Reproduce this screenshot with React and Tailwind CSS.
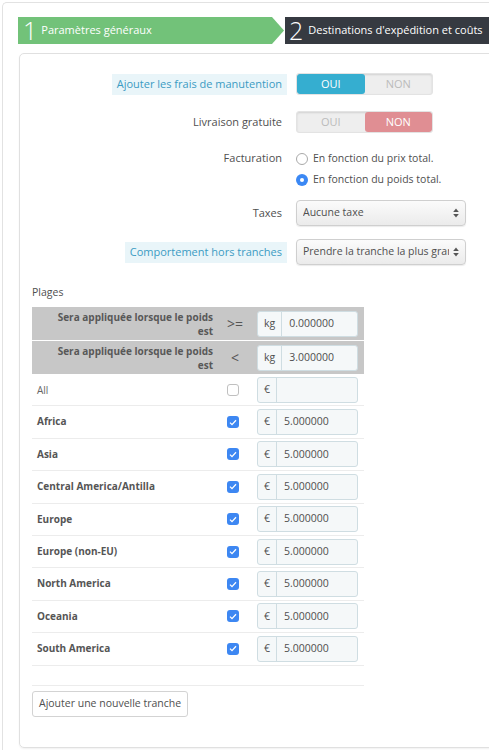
import React from "react";

function Toggle({ value }) {
  return (
    <div className="flex w-[137px] h-[22px] rounded-[3px] overflow-hidden bg-[#eeeeee] shadow-[inset_0_1px_2px_rgba(0,0,0,0.12)] border border-[#e3e3e3]">
      {value === "oui" ? (
        <>
          <div className="w-1/2 flex items-center justify-center text-[11px] text-white bg-[#35aed0] rounded-[3px]">OUI</div>
          <div className="w-1/2 flex items-center justify-center text-[11px] text-[#bbbbbb]">NON</div>
        </>
      ) : (
        <>
          <div className="w-1/2 flex items-center justify-center text-[11px] text-[#bbbbbb]">OUI</div>
          <div className="w-1/2 flex items-center justify-center text-[11px] text-white bg-[#e08e93] rounded-[3px]">NON</div>
        </>
      )}
    </div>
  );
}

function SelectBox({ text }) {
  return (
    <div className="w-[170px] h-[26px] rounded-[4px] border border-[#cfcfcf] bg-gradient-to-b from-[#fbfbfb] to-[#ebebeb] shadow-[0_1px_1px_rgba(0,0,0,0.08)] flex items-center pl-[6px] pr-[6px] text-[10.5px] text-[#4f4f4f]">
      <span className="flex-1 whitespace-nowrap overflow-hidden">{text}</span>
      <svg width="6" height="10" viewBox="0 0 6 10" className="ml-[4px] shrink-0">
        <polygon points="3,0.5 5.8,4 0.2,4" fill="#555" />
        <polygon points="3,9.5 5.8,6 0.2,6" fill="#555" />
      </svg>
    </div>
  );
}

function Radio({ checked }) {
  return checked ? (
    <span className="w-[12px] h-[12px] rounded-full bg-[#3b88f4] flex items-center justify-center shrink-0">
      <span className="w-[4px] h-[4px] rounded-full bg-white" />
    </span>
  ) : (
    <span className="w-[12px] h-[12px] rounded-full border border-[#a9a9a9] bg-white shrink-0" />
  );
}

function Checkbox({ checked }) {
  return checked ? (
    <span className="w-[12px] h-[12px] rounded-[3px] bg-[#3d87f2] flex items-center justify-center">
      <svg width="8" height="7" viewBox="0 0 8 7">
        <path d="M1 3.6 L3 5.6 L7 1.2" stroke="white" strokeWidth="1.3" fill="none" />
      </svg>
    </span>
  ) : (
    <span className="w-[12px] h-[12px] rounded-[3px] border border-[#c0c0c0] bg-white" />
  );
}

function InputGroup({ unit, value }) {
  return (
    <div className="ml-[5px] w-[101px] h-[26px] flex rounded-[3px] border border-[#cfdde2] bg-[#f5f8f9] text-[10.5px] text-[#4f4f4f]">
      <div className="px-[6px] flex items-center border-r border-[#cfdde2]">{unit}</div>
      <div className="flex-1 flex items-center pl-[7px]">{value}</div>
    </div>
  );
}

export default function App() {
  const regions = [
    "Africa",
    "Asia",
    "Central America/Antilla",
    "Europe",
    "Europe (non-EU)",
    "North America",
    "Oceania",
    "South America",
  ];
  return (
    <div
      className="w-[489px] h-[750px] overflow-hidden bg-white"
      style={{ fontFamily: '"Open Sans", "Noto Sans", sans-serif' }}
    >
      <div className="ml-[2px] mt-[2px] w-[560px] h-[780px] border-l border-t border-[#e2e2e2] rounded-tl-[5px] pl-[15px] pt-[14px]">
        {/* Steps */}
        <div className="flex h-[27px]">
          <div className="flex items-center bg-[#72c279] w-[254px] text-white pl-[5px]">
            <span className="text-[25px] font-light leading-none">1</span>
            <span className="text-[11px] ml-[4px] whitespace-nowrap">Paramètres généraux</span>
          </div>
          <svg width="12" height="27" viewBox="0 0 12 27" className="shrink-0">
            <polygon points="0,0 12,13.5 0,27" fill="#72c279" />
          </svg>
          <div className="ml-[1px] flex-1 bg-[#363a41] flex items-center text-white pl-[4px]">
            <span className="text-[25px] font-light leading-none">2</span>
            <span className="text-[11px] ml-[5px] whitespace-nowrap">Destinations d'expédition et coûts</span>
          </div>
        </div>

        {/* Card */}
        <div className="mt-[9px] ml-[1px] w-[540px] h-[695px] border border-[#e0e0e0] rounded-[5px] shadow-[0_1px_2px_rgba(0,0,0,0.06)] pt-[19px] text-[11px] text-[#4f4f4f]">
          {/* Row 1 */}
          <div className="flex items-center h-[22px]">
            <div className="w-[267px] flex justify-end">
              <span className="bg-[#e9f5f9] text-[#3b9bc3] px-[5px] h-[21px] flex items-center whitespace-nowrap">
                Ajouter les frais de manutention
              </span>
            </div>
            <div className="ml-[9px]">
              <Toggle value="oui" />
            </div>
          </div>
          {/* Row 2 */}
          <div className="flex items-center h-[22px] mt-[16px]">
            <div className="w-[267px] flex justify-end pr-[5px] whitespace-nowrap">Livraison gratuite</div>
            <div className="ml-[9px]">
              <Toggle value="non" />
            </div>
          </div>
          {/* Row 3 */}
          <div className="flex mt-[15px]">
            <div className="w-[267px] flex justify-end pr-[5px] h-[21px] items-center">Facturation</div>
            <div className="ml-[9px] flex flex-col text-[10.5px]">
              <div className="flex items-center h-[21px] gap-[5px] whitespace-nowrap">
                <Radio checked={false} />
                <span>En fonction du prix total.</span>
              </div>
              <div className="flex items-center h-[21px] gap-[5px] whitespace-nowrap">
                <Radio checked={true} />
                <span>En fonction du poids total.</span>
              </div>
            </div>
          </div>
          {/* Row 4 */}
          <div className="flex items-center mt-[10px]">
            <div className="w-[267px] flex justify-end pr-[5px]">Taxes</div>
            <div className="ml-[9px]">
              <SelectBox text="Aucune taxe" />
            </div>
          </div>
          {/* Row 5 */}
          <div className="flex items-center mt-[13px]">
            <div className="w-[267px] flex justify-end">
              <span className="bg-[#e9f5f9] text-[#3b9bc3] px-[5px] h-[21px] flex items-center whitespace-nowrap">
                Comportement hors tranches
              </span>
            </div>
            <div className="ml-[9px]">
              <SelectBox text="Prendre la tranche la plus grande" />
            </div>
          </div>

          {/* Plages */}
          <div className="ml-[12px] mt-[19px] w-[332px]">
            <div className="leading-[16px] text-[10.5px] text-[#4f4f4f]">Plages</div>
            <div className="mt-[7px]">
              {/* header rows */}
              <div className="flex h-[33px] bg-[#c7c7c7] items-center">
                <div className="w-[186px] self-start pt-[3px] pr-[5px] text-right font-bold text-[10px] leading-[14px] text-[#585858]">
                  Sera appliquée lorsque le poids
                  <br />
                  est
                </div>
                <div className="w-[34px] text-center text-[14px] text-[#555]">&gt;=</div>
                <InputGroup unit="kg" value="0.000000" />
              </div>
              <div className="flex h-[33px] bg-[#c7c7c7] items-center mt-[1px]">
                <div className="w-[186px] self-start pt-[3px] pr-[5px] text-right font-bold text-[10px] leading-[14px] text-[#585858]">
                  Sera appliquée lorsque le poids
                  <br />
                  est
                </div>
                <div className="w-[34px] text-center text-[14px] text-[#555]">&lt;</div>
                <InputGroup unit="kg" value="3.000000" />
              </div>
              {/* All row */}
              <div className="flex h-[32.4px] items-center border-b border-[#ececec]">
                <div className="w-[186px] pl-[5px] pt-[2px] text-[10px] text-[#666666]">All</div>
                <div className="w-[34px] flex justify-start pl-[9px]">
                  <Checkbox checked={false} />
                </div>
                <InputGroup unit="€" value="" />
              </div>
              {regions.map((r) => (
                <div key={r} className="flex h-[32.4px] items-center border-b border-[#ececec]">
                  <div className="w-[186px] self-start pt-[8px] pl-[5px] leading-[14px] font-bold text-[10px] text-[#555555] whitespace-nowrap">
                    {r}
                  </div>
                  <div className="w-[34px] flex justify-start pl-[9px]">
                    <Checkbox checked={true} />
                  </div>
                  <InputGroup unit="€" value="5.000000" />
                </div>
              ))}
              <div className="h-[19px]" />
              <div className="border-t border-[#ececec] pt-[5px]">
                <button className="h-[26px] px-[6px] border border-[#d3d3d3] rounded-[3px] bg-white text-[10.5px] text-[#4f4f4f] whitespace-nowrap">
                  Ajouter une nouvelle tranche
                </button>
              </div>
            </div>
          </div>
        </div>
      </div>
    </div>
  );
}
